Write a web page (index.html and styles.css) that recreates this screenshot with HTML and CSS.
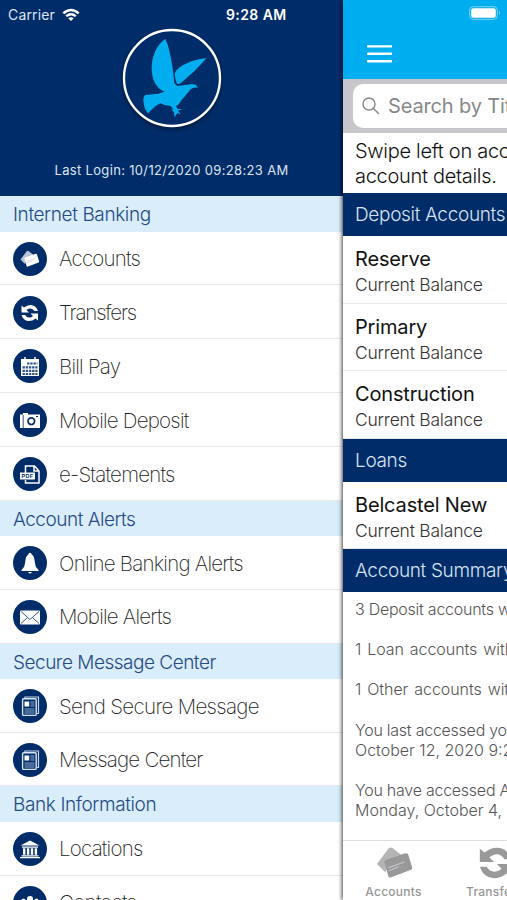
FILE: index.html
```
<!DOCTYPE html>
<html lang="en">
<head>
<meta charset="utf-8">
<title>Mobile Banking</title>
<link rel="stylesheet" href="styles.css">
</head>
<body>
<svg class="defs" width="0" height="0">
  <defs>
    <symbol id="cards" viewBox="0 0 40 38">
      <path opacity=".72" d="M2 20 14 4q2-2 4-1l13 10-17 5-3 11z"/>
      <path d="M10 19q-1-2 1-3l20-7q3-1 4 1l4 13q1 2-1 3l-21 8q-2 1-3-1z"/>
      <path d="m14 24 17-6m-16 9 10-4" class="cut"/>
    </symbol>
    <symbol id="cycle" viewBox="0 0 40 38">
      <path d="M4 4l5 4q6-5 13-5 11 0 15 12h-7q-4-6-10-5-4 1-6 3l5 5H4z"/>
      <path d="M37 34l-5-4q-6 5-13 5Q8 35 4 23h7q4 6 10 5 4-1 6-3l-5-5h15z"/>
    </symbol>
    <symbol id="doc" viewBox="0 0 34 34">
      <path d="M12 9.500V8h13.500v16.500H24" fill="none" stroke="#c9d8ea" stroke-width="1.200"/>
      <rect x="9.600" y="9.800" width="13.600" height="16.600" rx="1" fill="#002d6a" stroke="#d8e5f2" stroke-width="1.400"/>
      <path d="M11.500 12.500h4.700v5h-4.700z" fill="#fff"/>
      <path d="M17.500 13h4M17.500 15h4M17.500 17h4M11.500 20h10M11.500 22h10M11.500 24h10" stroke="#8fa9ca" stroke-width="1.200"/>
    </symbol>
  </defs>
</svg>
<div class="screen">
  <aside class="menu">
    <header class="profile">
      <div class="status"><span class="carrier">Carrier</span>
        <svg class="wifi" viewBox="0 0 18 13"><path d="M.5 4.500Q9-3 17.500 4.500L15.800 6.200Q9 .500 2.200 6.200zM3.300 7.400Q9 2.600 14.700 7.400L13 9.100Q9 5.900 5 9.100zM6.200 10.200Q9 8.200 11.800 10.200L9 13z"/></svg>
        <span class="clock">9:28 AM</span></div>
      <svg class="logo" viewBox="0 0 360 345">
        <circle cx="186" cy="174" r="144"/>
        <path d="M166 57C139 75 124 112 125 147C126 178 137 203 163 215L145 221L106 225Q98 229 101 249Q104 272 115 280Q132 259 151 250Q164 258 182 258L191 270L183 267L192 277L194 292L202 279L212 283L204 272L217 267L203 267L198 259Q207 255 212 244L242 208Q251 200 264 203Q258 191 243 193L225 195L202 198L193 190Q188 133 178 93Q173 69 166 57Z"/>
        <path d="M289 115C251 118 204 136 194 161Q195 178 201 191Q208 194 217 185L251 155Q270 137 289 115Z"/>
      </svg>
      <p class="login">Last Login: 10/12/2020 09:28:23 AM</p>
    </header>
    <h2 class="snug">Internet Banking</h2>
    <div class="item"><svg viewBox="0 0 34 34"><circle cx="17" cy="17" r="17"/><use href="#cards" x="6.500" y="7.500" width="20" height="19"/></svg><span>Accounts</span></div>
    <div class="item tight"><svg viewBox="0 0 34 34"><circle cx="17" cy="17" r="17"/><use href="#cycle" x="6.500" y="7.500" width="20" height="19"/></svg><span>Transfers</span></div>
    <div class="item"><svg viewBox="0 0 34 34"><circle cx="17" cy="17" r="17"/><path d="M8 10h18v17H8z"/><path d="M12 8v4M22 8v4" stroke="#fff" stroke-width="1.500"/><path d="M14 14.500h10.500M9.500 18.300h15M9.500 21.800h15M9.500 25h15" stroke="#315788" stroke-width="2.200" stroke-dasharray="2.400 .8"/></svg><span>Bill Pay</span></div>
    <div class="item"><svg viewBox="0 0 34 34"><circle cx="17" cy="17" r="17"/><path d="M7 11.500h3v-1.500h5v1.500h12V25H7z"/><path d="M10.200 12v13" stroke="#002d6a" stroke-width=".8"/><circle cx="18.300" cy="18.200" r="3.300" fill="#fff" stroke="#002d6a" stroke-width="1.700"/><path d="M23 13.500h2" stroke="#002d6a"/></svg><span>Mobile Deposit</span></div>
    <div class="item"><svg viewBox="0 0 34 34"><circle cx="17" cy="17" r="17"/><path d="M12.500 16V9h9l4.500 5v12H12.500v-3M21 9v5h5" fill="none" stroke="#fff" stroke-width="1.500"/><path d="M7 15.500h15v7H7z"/><text x="8.600" y="21.200">PDF</text></svg><span>e-Statements</span></div>
    <h2>Account Alerts</h2>
    <div class="item"><svg viewBox="0 0 34 34"><circle cx="17" cy="17" r="17"/><path d="M15.300 8.500Q15.500 6.800 17 6.800T18.700 8.500Q21 9.500 21.500 14T23 21L25.500 24v1H8.500v-1L11 21Q12 18 12.500 14T15.300 8.500ZM15 26h4q-2 3-4 0z"/></svg><span>Online Banking Alerts</span></div>
    <div class="item"><svg viewBox="0 0 34 34"><circle cx="17" cy="17" r="17"/><rect x="7" y="10.500" width="20" height="14" rx="1"/><path d="m8 11.500 9 8 9-8M8 23.500l6.500-6M26 23.500l-6.500-6" fill="none" stroke="#315788" stroke-width="1"/></svg><span>Mobile Alerts</span></div>
    <h2>Secure Message Center</h2>
    <div class="item loose"><svg viewBox="0 0 34 34"><circle cx="17" cy="17" r="17"/><use href="#doc"/></svg><span>Send Secure Message</span></div>
    <div class="item"><svg viewBox="0 0 34 34"><circle cx="17" cy="17" r="17"/><use href="#doc"/></svg><span>Message Center</span></div>
    <h2 class="snug">Bank Information</h2>
    <div class="item"><svg viewBox="0 0 34 34"><circle cx="17" cy="17" r="17"/><path d="M17 8.500 26.500 13.500H7.500zM9 14.500h16v1.300H9zM10 16.300h2.400v6.400H10zM13.900 16.300h2.400v6.400h-2.400zM17.800 16.300h2.400v6.400h-2.400zM21.700 16.300h2.400v6.400h-2.400zM8.500 23.200h17v1.200h-17zM7 25h20v1.300H7z"/></svg><span>Locations</span></div>
    <div class="item loose"><svg viewBox="0 0 34 34"><circle cx="17" cy="17" r="17"/><path d="M14 13a3 3 0 0 1 6 0q0 3-3 3t-3-3zM12 26v-6q0-3 5-3t5 3v6zM8.500 14.500a2 2 0 0 1 4 0 2 2 0 0 1-4 0zM21.500 14.500a2 2 0 0 1 4 0 2 2 0 0 1-4 0zM7 24v-4q1-2 4-2v6zM27 24v-4q-1-2-4-2v6z"/></svg><span>Contacts</span></div>
  </aside>
  <main class="page">
    <header class="topbar">
      <svg class="battery" viewBox="0 0 32 14"><rect x=".7" y=".7" width="27.600" height="12.600" rx="3.500"/><rect x="2.200" y="2.200" width="24.600" height="9.600" rx="2" class="charge"/><path d="M30 5q2 2 0 4z" class="nub"/></svg>
      <svg class="burger" viewBox="0 0 25 18"><path d="M0 1.400h25M0 8.800h25M0 16.200h25"/></svg>
    </header>
    <div class="search"><div class="field"><svg viewBox="0 0 18 18"><circle cx="7" cy="7" r="6"/><path d="m11.500 11.500 5.500 5.500"/></svg><span>Search by Title</span></div></div>
    <p class="hint">Swipe left on account for<br>account details.</p>
    <h3>Deposit Accounts</h3>
    <div class="account"><b>Reserve</b><span>Current Balance</span></div>
    <div class="account"><b>Primary</b><span>Current Balance</span></div>
    <div class="account"><b>Construction</b><span>Current Balance</span></div>
    <h3>Loans</h3>
    <div class="account"><b>Belcastel New</b><span>Current Balance</span></div>
    <h3>Account Summary</h3>
    <div class="summary">
      <p>3 Deposit accounts with</p>
      <p class="one">1 Loan accounts with</p>
      <p class="one">1 Other accounts with</p>
      <p>You last accessed your<br><span class="wide">October 12, 2020 9:28</span></p>
      <p>You have accessed Account<br><span class="wide">Monday, October 4, 2020</span></p>
    </div>
    <nav class="tabs">
      <div><svg><use href="#cards"/></svg><span>Accounts</span></div>
      <div><svg><use href="#cycle"/></svg><span>Transfers</span></div>
    </nav>
  </main>
</div>
</body>
</html>
```
FILE: styles.css
```
* { box-sizing: border-box; }
body, h2, h3, p { margin: 0; font-weight: 300; }
body { width: 507px; height: 900px; overflow: hidden; font-family: Inter, "Liberation Sans", sans-serif; }
.defs { display: block; position: absolute; }
.screen { display: flex; width: 507px; height: 900px; overflow: hidden; background: #fff; }

.menu { flex: 0 0 343px; height: 900px; overflow: hidden; }
.profile { height: 196.400px; background: #002d6a; color: #fff; display: flex; flex-direction: column; align-items: center; }
.status { display: flex; align-items: center; width: 100%; height: 20px; margin-top: 4px; padding-left: 8px; font-size: 14px; font-weight: 400; white-space: nowrap; }
.carrier { width: 47px; letter-spacing: .15px; color: #dde5ef; }
.wifi { width: 18px; height: 13px; margin-left: 7px; fill: #fff; }
.clock { margin-left: 146px; font-weight: 600; letter-spacing: .4px; }
.logo { flex: none; width: 120px; height: 115px; margin-top: -4px; margin-left: -3px; fill: #00adee; }
.logo circle { fill: #002d6a; stroke: #fff; stroke-width: 7; filter: drop-shadow(0 6px 8px rgba(0, 0, 0, .45)); }
.login { margin-top: 26px; font-size: 13px; line-height: 18px; font-weight: 400; letter-spacing: .33px; color: #dce5f0; white-space: nowrap; }

.menu h2 { height: 35.300px; padding-left: 13px; background: #d9edfa; color: #244a86; font-size: 19px; line-height: 37px; letter-spacing: -.49px; white-space: nowrap; }
.menu h2.snug { letter-spacing: -.39px; }
.item { display: flex; align-items: center; gap: 12px; height: 53.800px; padding: 1.500px 0 0 13px; border-bottom: 1px solid #e9e9eb; color: #222; font-size: 20.500px; font-weight: 200; letter-spacing: -.78px; white-space: nowrap; }
.item.tight { letter-spacing: -1.150px; }
.item.loose { letter-spacing: -.65px; }
.item svg { flex: none; width: 34px; height: 34px; fill: #fff; }
.item svg > circle:first-child { fill: #002d6a; }
.item text { fill: #002d6a; font: 700 5.500px "Liberation Sans", sans-serif; letter-spacing: .2px; }
.cut { fill: none; stroke: #c4c8ce; stroke-width: 1.200; }

.page { position: relative; flex: none; width: 343px; height: 900px; display: flex; flex-direction: column; background: #fff; box-shadow: -1px 0 4px rgba(0, 0, 0, .75); white-space: nowrap; }
.topbar { height: 79.400px; flex: none; background: #00adee; padding: 6px 0 0 24px; }
.battery { display: block; width: 32px; height: 14px; margin-left: 102px; fill: none; stroke: #7fd3f4; }
.charge { fill: #fff; stroke: none; }
.nub { fill: #7fd3f4; stroke: none; }
.burger { display: block; width: 25px; height: 18px; margin-top: 24.500px; stroke: #fff; stroke-width: 2.400; }
.search { flex: none; height: 53.500px; padding: 4.500px 0 0 10px; background: #c6c6cb; }
.field { display: flex; align-items: center; gap: 8px; height: 44px; padding-left: 9px; border-radius: 10px 0 0 10px; background: #fff; color: #87878b; font-size: 20px; letter-spacing: -.15px; font-weight: 400; }
.field svg { width: 18px; height: 18px; fill: none; stroke: #87878b; stroke-width: 1.400; }
.hint { flex: none; height: 60.500px; padding: 6.500px 0 0 12px; font-size: 20px; line-height: 24.500px; letter-spacing: -.3px; color: #111; }
.page h3 { flex: none; height: 42.700px; padding-left: 12px; background: #002d6a; color: #d8e3f0; font-size: 19px; line-height: 44px; letter-spacing: -.33px; }
.account { flex: none; height: 67.600px; padding: 10px 0 0 12px; border-bottom: 1px solid #e9e9eb; display: flex; flex-direction: column; }
.account b { font-size: 20px; line-height: 26px; font-weight: 400; letter-spacing: -.16px; color: #111; }
.account span { font-size: 17.500px; line-height: 25px; letter-spacing: -.22px; color: #333; }
.summary { flex: 1; display: flex; flex-direction: column; gap: 20.300px; padding: 7px 0 0 12px; overflow: hidden; font-size: 16px; line-height: 20px; letter-spacing: -.25px; color: #555; }
.summary .one { word-spacing: 1.500px; letter-spacing: -.05px; }
.summary .wide { letter-spacing: 0; }
.tabs { flex: none; height: 60px; display: flex; border-top: 1px solid #ddd; color: #969696; font-size: 12px; font-weight: 500; letter-spacing: .25px; }
.tabs div { width: 101px; flex: none; display: flex; flex-direction: column; align-items: center; padding-top: 4px; }
.tabs svg { width: 38px; height: 36px; fill: #999; }
.tabs span { line-height: 15px; margin-top: 3px; }
```
